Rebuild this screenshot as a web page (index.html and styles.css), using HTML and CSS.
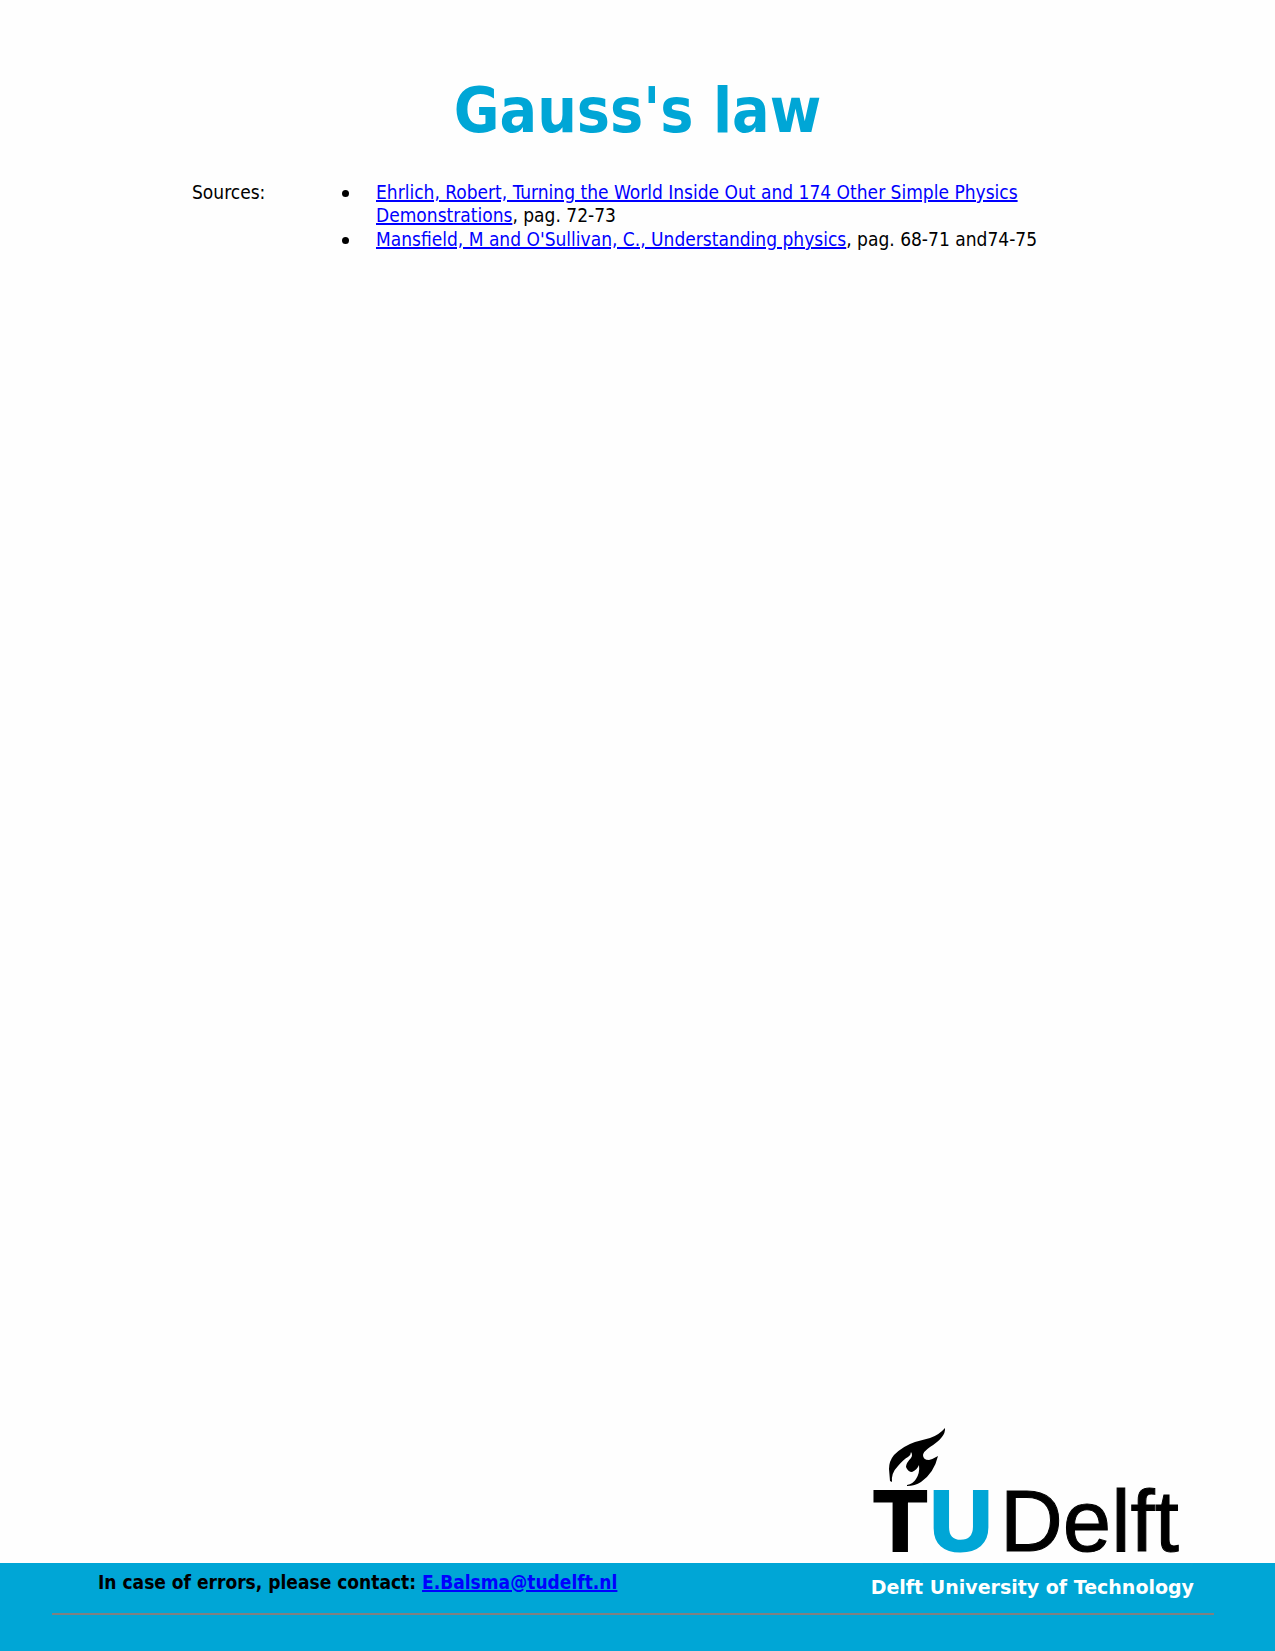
FILE: index.html
```html
<!DOCTYPE html>
<html lang="en">
<head>
<meta charset="utf-8">
<meta name="viewport" content="width=device-width, initial-scale=1">
<title>Gauss's law</title>
<link rel="stylesheet" href="styles.css">
</head>
<body>
<main class="content">
  <h1 class="title">Gauss's law</h1>
  <section class="sources">
    <h2 class="sources-label">Sources:</h2>
    <ul class="source-list">
      <li><a href="#ehrlich">Ehrlich, Robert, Turning the World Inside Out and 174 Other Simple Physics<br>Demonstrations</a>, pag. 72-73</li>
      <li><a href="#mansfield">Mansfield, M and O'Sullivan, C., Understanding physics</a>, pag. 68-71 and74-75</li>
    </ul>
  </section>
</main>
<div class="brand">
  <svg class="logo" width="330" height="156" viewBox="0 0 330 156" role="img" aria-label="TU Delft">
    <path d="M75 8 Q69 15 60 18 L45 22 Q33 26 24 35 Q19 41 19 49 L20 61 L22 62 Q21 53 28 46 Q34 39 38 37 Q41 35 41 32 Q43 35 41 38 Q36 43 36 47 Q38 52 42 52 Q47 50 49 45 Q50 53 46 59 Q43 64 37 65 L37 66 Q45 66 51 62 Q64 53 68 36 Q63 39 59 40 Q53 40 53 35 Q53 32 60 27 Q76 17 75 8 Z"/>
    <text class="logo-t" x="4" y="130">T</text>
    <text class="logo-u" x="60" y="130">U</text>
    <text class="logo-delft" x="130" y="131">Delft</text>
  </svg>
</div>
<footer class="footer">
  <div class="footer-row">
    <p class="contact">In case of errors, please contact: <a href="mailto:E.Balsma@tudelft.nl">E.Balsma@tudelft.nl</a></p>
    <p class="tagline">Delft University of Technology</p>
  </div>
  <hr class="rule">
</footer>
</body>
</html>
```
FILE: styles.css
```css
* {
  box-sizing: border-box;
  margin: 0;
  padding: 0;
}

body {
  display: flex;
  flex-direction: column;
  min-height: 100vh;
  background: #fefefe;
  color: #000;
  font: 19px/23px "DejaVu Sans Condensed", "DejaVu Sans", sans-serif;
}

a {
  color: #00f;
  text-decoration-thickness: 2px;
}

.content {
  flex: 1;
  padding: 73px 192px 0;
}

.title {
  color: #00a6d6;
  font-size: 62px;
  line-height: 76px;
  text-align: center;
}

.sources {
  display: flex;
  margin-top: 32px;
}

.sources-label {
  flex: 0 0 184px;
  font-size: 19px;
  font-weight: 400;
}

.source-list {
  display: grid;
  gap: 1px;
  list-style: none;
}

.source-list a {
  text-underline-offset: 1px;
}

.source-list li {
  position: relative;
}

.source-list li::before {
  content: "";
  position: absolute;
  top: 9px;
  left: -34px;
  width: 7px;
  height: 7px;
  border-radius: 50%;
  background: #000;
}

.brand {
  display: flex;
  justify-content: flex-end;
  margin-bottom: -13px;
  padding-right: 75px;
}

.logo {
  display: block;
  font-family: "Liberation Sans", Arial, sans-serif;
}

.logo-t,
.logo-u {
  font-size: 86px;
  font-weight: 700;
  stroke-width: 3px;
}

.logo-t {
  stroke: #000;
}

.logo-u {
  fill: #00a6d6;
  stroke: #00a6d6;
}

.logo-delft {
  font-size: 87px;
  stroke: #000;
  stroke-width: 1px;
}

.footer {
  padding: 8px 61px 36px 52px;
  background: #00a6d6;
  font-weight: 700;
}

.footer-row {
  display: flex;
  justify-content: space-between;
  padding: 0 20px 0 46px;
}

.contact a {
  text-underline-offset: 1px;
}

.tagline {
  padding-top: 5px;
  color: #fff;
  font-family: "DejaVu Sans", Verdana, sans-serif;
}

.rule {
  height: 2px;
  margin-top: 14px;
  border: 0;
  background: #808080;
}
```
